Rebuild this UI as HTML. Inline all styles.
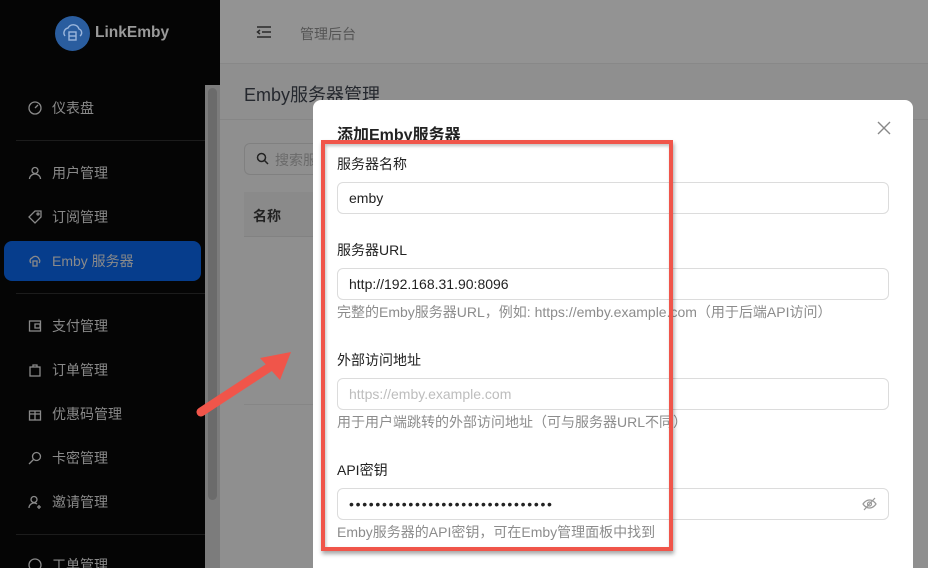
<!DOCTYPE html>
<html style="width:928px;height:568px;overflow:hidden"><head><meta charset="utf-8"><style>
*{margin:0;padding:0;box-sizing:border-box}
body{width:928px;height:568px;overflow:hidden;position:relative;background:#8f8f8f;font-family:"Liberation Sans","Noto Sans CJK SC",sans-serif}
.side{position:absolute;left:0;top:0;width:220px;height:568px;background:#050505}
.logo{position:absolute;left:55px;top:16px;width:35px;height:35px;border-radius:50%;background:#2a5d9f}
.brand{position:absolute;left:95px;top:24px;color:#9a9a9a;font-weight:bold;font-size:15.5px}
.track{position:absolute;left:205px;top:85px;width:15px;height:483px;background:#7c7c7c}
.thumb{position:absolute;left:208px;top:88px;width:9px;height:412px;border-radius:5px;background:#6b6b6b}
.item{position:absolute;left:28px;color:#8a8a8a;font-size:14px;display:flex;align-items:center}
.item svg{width:14px;height:14px;margin-right:10px;stroke:#8a8a8a;fill:none;stroke-width:1.3}
.sep{position:absolute;left:16px;width:189px;height:1px;background:#1c1c1c}
.active{position:absolute;left:4px;top:241px;width:197px;height:40px;border-radius:8px;background:#063d8c}
.hdr{position:absolute;left:220px;top:0;width:708px;height:64px;background:#939393;border-bottom:1px solid #888}
.modal{position:absolute;left:313px;top:100px;width:600px;height:468px;background:#fff;border-radius:8px 8px 0 0}
.lab{position:absolute;left:337px;font-size:14px;color:#222}
.inp{position:absolute;left:337px;width:552px;height:32px;border:1px solid #dcdcdc;border-radius:6px;font-size:14px;color:#222;padding:7px 11px;font-family:"Liberation Sans",sans-serif}
.help{position:absolute;left:337px;font-size:14px;color:#8c8c8c;white-space:nowrap}
</style></head><body>
<div class="side">
<div class="logo"><svg width="35" height="35" viewBox="0 0 35 35" fill="none" stroke="#9bb6dc" stroke-width="1.4"><path d="M10 20a5 5 0 0 1 3-8 6 6 0 0 1 11 1 4 4 0 0 1 1 7"/><rect x="14" y="16" width="7" height="8"/><path d="M14 20h7"/></svg></div>
<div class="brand">LinkEmby</div>
<div class="item" style="top:98px"><svg viewBox="0 0 14 14"><circle cx="7" cy="7" r="6"/><path d="M7 7l3-3"/></svg>仪表盘</div>
<div class="sep" style="top:140px"></div>
<div class="item" style="top:163px"><svg viewBox="0 0 14 14"><circle cx="7" cy="4.5" r="3"/><path d="M1.5 13a5.5 5 0 0 1 11 0"/></svg>用户管理</div>
<div class="item" style="top:207px"><svg viewBox="0 0 14 14"><path d="M7 1h6v6l-6 6-6-6z"/><circle cx="10" cy="4" r="1"/></svg>订阅管理</div>
<div class="active"></div>
<div class="item" style="top:251px"><svg viewBox="0 0 14 14"><path d="M3 9a3 3 0 0 1 1-5 4 4 0 0 1 7 1 3 3 0 0 1 0 4"/><rect x="5" y="7" width="4" height="5"/></svg>Emby 服务器</div>
<div class="sep" style="top:293px"></div>
<div class="item" style="top:316px"><svg viewBox="0 0 14 14"><rect x="1.5" y="2" width="11" height="10"/><path d="M7 5h5v4H7z"/></svg>支付管理</div>
<div class="item" style="top:360px"><svg viewBox="0 0 14 14"><rect x="2" y="4" width="10" height="9"/><path d="M5 4V2h4v2"/></svg>订单管理</div>
<div class="item" style="top:404px"><svg viewBox="0 0 14 14"><rect x="1.5" y="4" width="11" height="9"/><path d="M7 4v9M1.5 7h11"/></svg>优惠码管理</div>
<div class="item" style="top:448px"><svg viewBox="0 0 14 14"><circle cx="8.5" cy="5.5" r="4"/><path d="M5.5 8.5L1 13"/></svg>卡密管理</div>
<div class="item" style="top:492px"><svg viewBox="0 0 14 14"><circle cx="6" cy="4.5" r="3"/><path d="M1 13a5 5 0 0 1 8-4M11 10v4M9 12h4"/></svg>邀请管理</div>
<div class="sep" style="top:534px"></div>
<div class="item" style="top:555px"><svg viewBox="0 0 14 14"><circle cx="7" cy="7" r="6"/></svg>工单管理</div>
</div>
<div class="track"></div><div class="thumb"></div>
<div class="hdr">
<svg style="position:absolute;left:36px;top:25px" width="16" height="14" viewBox="0 0 16 14" stroke="#2a2a2a" stroke-width="1.5" fill="none"><path d="M1 2h14M6 7h9M1 12h14M4 5L1.5 7 4 9"/></svg>
<div style="position:absolute;left:80px;top:24px;font-size:14px;color:#555">管理后台</div>
</div>
<div style="position:absolute;left:244px;top:81px;font-size:18px;color:#25282e">Emby服务器管理</div>
<div style="position:absolute;left:220px;top:119px;width:708px;height:1px;background:#868686"></div>
<div style="position:absolute;left:244px;top:143px;width:80px;height:32px;border:1px solid #808080;border-radius:6px;font-size:14px;color:#6a6a6a;padding:6px 0 0 30px">搜索服</div>
<svg style="position:absolute;left:256px;top:152px" width="13" height="13" viewBox="0 0 13 13" stroke="#222" stroke-width="1.5" fill="none"><circle cx="5.5" cy="5.5" r="4"/><path d="M8.5 8.5L12 12"/></svg>
<div style="position:absolute;left:244px;top:192px;width:80px;height:45px;background:#8a8a8a;border-bottom:1px solid #828282;font-size:14px;font-weight:bold;color:#222;padding:14px 0 0 9px">名称</div>
<div style="position:absolute;left:244px;top:404px;width:70px;height:1px;background:#868686"></div>
<div class="modal"></div>
<div style="position:absolute;left:337px;top:121px;font-size:16px;font-weight:bold;color:#222">添加Emby服务器</div>
<svg style="position:absolute;left:877px;top:121px" width="14" height="14" viewBox="0 0 14 14" stroke="#888" stroke-width="1.4"><path d="M1 1l12 12M13 1L1 13"/></svg>
<div class="lab" style="top:154px">服务器名称</div>
<div class="inp" style="top:182px">emby</div>
<div class="lab" style="top:240px">服务器URL</div>
<div class="inp" style="top:268px">http://192.168.31.90:8096</div>
<div class="help" style="top:302px">完整的Emby服务器URL，例如: https://emby.example.com（用于后端API访问）</div>
<div class="lab" style="top:350px">外部访问地址</div>
<div class="inp" style="top:378px;color:#bdbdbd">https://emby.example.com</div>
<div class="help" style="top:412px">用于用户端跳转的外部访问地址（可与服务器URL不同）</div>
<div class="lab" style="top:460px">API密钥</div>
<div class="inp" style="top:488px;letter-spacing:1.7px">•••••••••••••••••••••••••••••••</div>
<svg style="position:absolute;left:862px;top:497px" width="15" height="14" viewBox="0 0 15 14" stroke="#999" stroke-width="1.2" fill="none"><path d="M1 7s2.5-4 6.5-4 6.5 4 6.5 4-2.5 4-6.5 4S1 7 1 7z"/><circle cx="7.5" cy="7" r="2"/><path d="M2 13L13 1"/></svg>
<div class="help" style="top:522px">Emby服务器的API密钥，可在Emby管理面板中找到</div>
<div style="position:absolute;left:321px;top:140px;width:352px;height:411px;border:4px solid #f0554a;box-shadow:1px 3px 4px rgba(0,0,0,.35), inset 1px 2px 3px rgba(0,0,0,.25)"></div>
<svg style="position:absolute;left:190px;top:340px" width="110" height="85" viewBox="0 0 110 85"><path d="M11 72L92 19" stroke="#f0554a" stroke-width="9" stroke-linecap="round"/><path d="M101 12L70 18 90 40z" fill="#f0554a"/></svg>
</body></html>
